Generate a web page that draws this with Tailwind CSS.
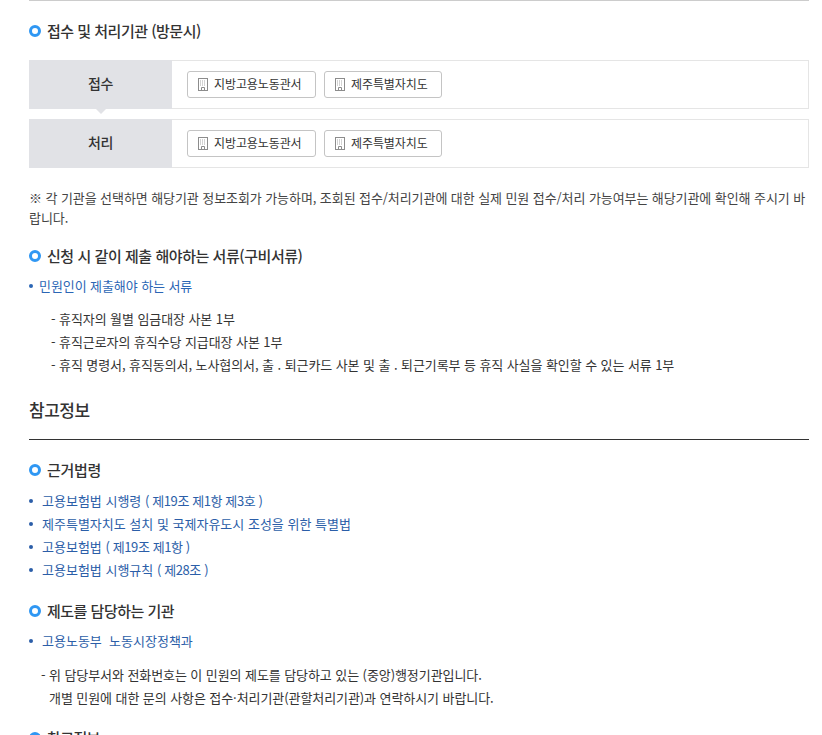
<!DOCTYPE html>
<html lang="ko">
<head>
<meta charset="utf-8">
<script src="https://cdn.jsdelivr.net/npm/@tailwindcss/browser@4"></script>
</head>
<body class="bg-white overflow-hidden font-['Noto_Sans_CJK_KR','Noto_Sans',sans-serif] text-[#333]">
<div class="w-[822px] h-[735px] overflow-hidden pl-[29px] pr-[13px]">
  <div class="h-px bg-[#cccccc]"></div>

  <h4 class="mt-[20px] h-[20px] flex items-center gap-[6px] text-[15px] leading-[20px] font-medium tracking-[-0.5px] text-[#333]">
    <span class="w-[12px] h-[12px] rounded-full border-[3px] border-[#2f97f3] shrink-0"></span>접수 및 처리기관 (방문시)
  </h4>

  <div class="mt-[19px] flex h-[49px] border border-[#e5e5e5] relative">
    <div class="w-[143px] -my-px -ml-px pb-[2px] bg-[#e1e2e6] flex items-center justify-center text-[14px] font-medium tracking-[-0.5px] text-[#333] shrink-0">접수</div>
    <div class="flex gap-[8px] pl-[15px] pt-[10px]">
      <a class="h-[27px] w-[129px] border border-[#c4c4c4] rounded-[3px] flex items-center pl-[10px] gap-[6px] pb-px text-[12px] tracking-[-0.1px] text-[#333]"><svg class="shrink-0 mt-px" width="10" height="13" viewBox="0 0 10 13" fill="none"><rect x=".5" y=".5" width="9" height="12" stroke="#8c8c8c"/><path d="M3.5 12.5V9.5h3v3" stroke="#8c8c8c"/><path d="M2 3h6M2 5h6M2 7h6" stroke="#a8a8a8" stroke-dasharray="1 1"/></svg>지방고용노동관서</a>
      <a class="h-[27px] w-[118px] border border-[#c4c4c4] rounded-[3px] flex items-center pl-[10px] gap-[6px] pb-px text-[12px] tracking-[-0.1px] text-[#333]"><svg class="shrink-0 mt-px" width="10" height="13" viewBox="0 0 10 13" fill="none"><rect x=".5" y=".5" width="9" height="12" stroke="#8c8c8c"/><path d="M3.5 12.5V9.5h3v3" stroke="#8c8c8c"/><path d="M2 3h6M2 5h6M2 7h6" stroke="#a8a8a8" stroke-dasharray="1 1"/></svg>제주특별자치도</a>
    </div>
    <span class="absolute left-[65px] top-[47px] w-0 h-0 border-x-[6px] border-x-transparent border-t-[6px] border-t-[#e1e2e6]"></span>
  </div>

  <div class="mt-[10px] flex h-[49px] border border-[#e5e5e5]">
    <div class="w-[143px] -my-px -ml-px pb-[2px] bg-[#e1e2e6] flex items-center justify-center text-[14px] font-medium tracking-[-0.5px] text-[#333] shrink-0">처리</div>
    <div class="flex gap-[8px] pl-[15px] pt-[10px]">
      <a class="h-[27px] w-[129px] border border-[#c4c4c4] rounded-[3px] flex items-center pl-[10px] gap-[6px] pb-px text-[12px] tracking-[-0.1px] text-[#333]"><svg class="shrink-0 mt-px" width="10" height="13" viewBox="0 0 10 13" fill="none"><rect x=".5" y=".5" width="9" height="12" stroke="#8c8c8c"/><path d="M3.5 12.5V9.5h3v3" stroke="#8c8c8c"/><path d="M2 3h6M2 5h6M2 7h6" stroke="#a8a8a8" stroke-dasharray="1 1"/></svg>지방고용노동관서</a>
      <a class="h-[27px] w-[118px] border border-[#c4c4c4] rounded-[3px] flex items-center pl-[10px] gap-[6px] pb-px text-[12px] tracking-[-0.1px] text-[#333]"><svg class="shrink-0 mt-px" width="10" height="13" viewBox="0 0 10 13" fill="none"><rect x=".5" y=".5" width="9" height="12" stroke="#8c8c8c"/><path d="M3.5 12.5V9.5h3v3" stroke="#8c8c8c"/><path d="M2 3h6M2 5h6M2 7h6" stroke="#a8a8a8" stroke-dasharray="1 1"/></svg>제주특별자치도</a>
    </div>
  </div>

  <p class="mt-[20px] text-[13px] leading-[20px] tracking-[-0.08px] text-[#444]">※ 각 기관을 선택하면 해당기관 정보조회가 가능하며, 조회된 접수/처리기관에 대한 실제 민원 접수/처리 가능여부는 해당기관에 확인해 주시기 바랍니다.</p>

  <h4 class="mt-[18px] h-[20px] flex items-center gap-[6px] text-[15px] leading-[20px] font-medium tracking-[-0.45px] text-[#333]">
    <span class="w-[12px] h-[12px] rounded-full border-[3px] border-[#2f97f3] shrink-0"></span>신청 시 같이 제출 해야하는 서류(구비서류)
  </h4>

  <div class="mt-[10px] h-[20px] flex items-center text-[13px] leading-[20px] tracking-[-0.08px] text-[#2b66b5]">
    <span class="w-[4px] h-[4px] rounded-full bg-[#2b66b5] mr-[6px]"></span>민원인이 제출해야 하는 서류
  </div>

  <ul class="mt-[11px] ml-[22px] text-[13px] leading-[23px] tracking-[-0.08px] text-[#333]">
    <li>- 휴직자의 월별 임금대장 사본 1부</li>
    <li>- 휴직근로자의 휴직수당 지급대장 사본 1부</li>
    <li>- 휴직 명령서, 휴직동의서, 노사협의서, 출 . 퇴근카드 사본 및 출 . 퇴근기록부 등 휴직 사실을 확인할 수 있는 서류 1부</li>
  </ul>

  <h3 class="mt-[22px] h-[24px] text-[17px] leading-[24px] font-medium tracking-[-0.5px] text-[#333]">참고정보</h3>
  <div class="mt-[17px] h-px bg-[#333]"></div>

  <h4 class="mt-[20px] h-[20px] flex items-center gap-[6px] text-[15px] leading-[20px] font-medium tracking-[-0.3px] text-[#333]">
    <span class="w-[12px] h-[12px] rounded-full border-[3px] border-[#2f97f3] shrink-0"></span>근거법령
  </h4>

  <ul class="mt-[9px] text-[13px] leading-[23px] text-[#2b5ea8]">
    <li class="flex items-center whitespace-pre"><span class="w-[4px] h-[4px] rounded-full bg-[#2b5ea8] mr-[9px]"></span>고용보험법 시행령 <span class="tracking-[-0.4px]">( 제19조 제1항 제3호 )</span></li>
    <li class="flex items-center"><span class="w-[4px] h-[4px] rounded-full bg-[#2b5ea8] mr-[9px]"></span>제주특별자치도 설치 및 국제자유도시 조성을 위한 특별법</li>
    <li class="flex items-center whitespace-pre"><span class="w-[4px] h-[4px] rounded-full bg-[#2b5ea8] mr-[9px]"></span>고용보험법 <span class="tracking-[-0.4px]">( 제19조 제1항 )</span></li>
    <li class="flex items-center whitespace-pre"><span class="w-[4px] h-[4px] rounded-full bg-[#2b5ea8] mr-[9px]"></span>고용보험법 시행규칙 <span class="tracking-[-0.4px]">( 제28조 )</span></li>
  </ul>

  <h4 class="mt-[20px] h-[20px] flex items-center gap-[6px] text-[15px] leading-[20px] font-medium tracking-[-0.5px] text-[#333]">
    <span class="w-[12px] h-[12px] rounded-full border-[3px] border-[#2f97f3] shrink-0"></span>제도를 담당하는 기관
  </h4>

  <div class="mt-[10px] h-[20px] flex items-center text-[13px] leading-[20px] text-[#2b5ea8]">
    <span class="w-[4px] h-[4px] rounded-full bg-[#2b5ea8] mr-[9px]"></span><span class="whitespace-pre">고용노동부  노동시장정책과</span>
  </div>

  <div class="mt-[12px] ml-[12px] text-[13px] leading-[23px] tracking-[-0.08px] text-[#333]">
    <p>- 위 담당부서와 전화번호는 이 민원의 제도를 담당하고 있는 (중앙)행정기관입니다.</p>
    <p class="pl-[8px]">개별 민원에 대한 문의 사항은 접수·처리기관(관할처리기관)과 연락하시기 바랍니다.</p>
  </div>

  <h4 class="mt-[19px] h-[20px] flex items-center gap-[6px] text-[15px] leading-[20px] font-medium tracking-[-0.6px] text-[#333]">
    <span class="w-[12px] h-[12px] rounded-full border-[3px] border-[#2f97f3] shrink-0"></span>참고정보
  </h4>
</div>
</body>
</html>
